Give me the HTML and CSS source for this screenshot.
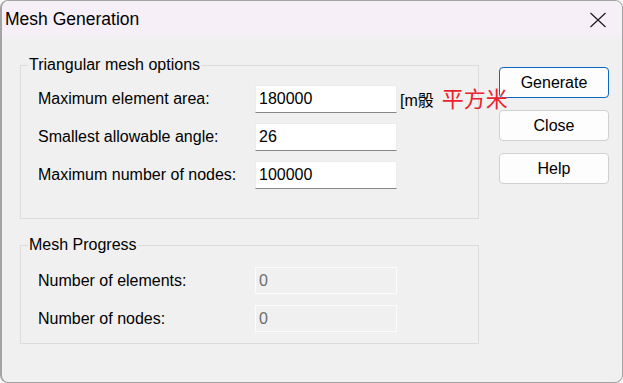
FILE: index.html
```html
<!DOCTYPE html>
<html lang="en">
<head>
    <meta charset="UTF-8">
    <meta name="viewport" content="width=device-width, initial-scale=1.0">
    <title>Mesh Generation</title>
    <link rel="stylesheet" href="styles.css">
</head>
<body>
    <div class="window">
        <div class="titlebar">
            <span class="title">Mesh Generation</span>
            <button class="close-x" aria-label="Close">
                <svg width="18" height="16" viewBox="0 0 18 16">
                    <path d="M1.5 1 L16.5 15 M16.5 1 L1.5 15" stroke="#1b1b1b" stroke-width="1.2" fill="none"/>
                </svg>
            </button>
        </div>
        <div class="content">
            <div class="groups">
                <fieldset class="group options">
                    <legend>Triangular mesh options</legend>
                    <div class="form-row">
                        <label for="area">Maximum element area:</label>
                        <input type="text" id="area" value="180000">
                        <span class="unit">[m骰</span>
                        <span class="unit-cn">平方米</span>
                    </div>
                    <div class="form-row">
                        <label for="angle">Smallest allowable angle:</label>
                        <input type="text" id="angle" value="26">
                    </div>
                    <div class="form-row">
                        <label for="nodes">Maximum number of nodes:</label>
                        <input type="text" id="nodes" value="100000">
                    </div>
                </fieldset>
                <fieldset class="group progress">
                    <legend>Mesh Progress</legend>
                    <div class="form-row">
                        <label for="elements-out">Number of elements:</label>
                        <input type="text" id="elements-out" value="0" disabled>
                    </div>
                    <div class="form-row">
                        <label for="nodes-out">Number of nodes:</label>
                        <input type="text" id="nodes-out" value="0" disabled>
                    </div>
                </fieldset>
            </div>
            <div class="actions">
                <button class="btn primary">Generate</button>
                <button class="btn">Close</button>
                <button class="btn">Help</button>
            </div>
        </div>
    </div>
</body>
</html>
```

FILE: styles.css
```css
body {
    margin: 0;
    background-color: #f7f7f7;
    font-family: "Liberation Sans", Arial, "Noto Sans CJK SC", sans-serif;
    font-size: 16px;
    color: #000;
}
.window {
    box-sizing: border-box;
    width: 623px;
    height: 383px;
    border: 1px solid #a3a3a3;
    border-left-width: 2px;
    border-radius: 8px;
    background: #f0f0f0;
    overflow: hidden;
}
.titlebar {
    height: 35px;
    display: flex;
    align-items: center;
    justify-content: space-between;
    background: #f6eff7;
    padding-left: 3px;
}
.title {
    font-size: 17.5px;
    padding-top: 2px;
}
.close-x {
    width: 46px;
    height: 35px;
    border: none;
    background: none;
    display: flex;
    align-items: center;
    justify-content: center;
    padding: 2px 0 0 3px;
    margin-right: 3px;
}
.content {
    display: flex;
    gap: 20px;
    padding: 0 14px 0 18px;
}
.groups {
    display: flex;
    flex-direction: column;
    width: 459px;
    flex-shrink: 0;
}
.group {
    margin: 20px 0 0;
    padding: 11px 0 29px 17px;
    border: 1px solid #dcdcdc;
    display: flex;
    flex-direction: column;
    gap: 10px;
    min-width: 0;
}
.group legend {
    margin-left: -10px;
    padding: 0 1px;
    line-height: 18px;
}
.group.progress {
    margin-top: 17px;
    padding: 13px 0 11px 17px;
    gap: 11px;
}
.form-row {
    display: flex;
    align-items: center;
    white-space: nowrap;
}
.form-row label {
    width: 217px;
    flex-shrink: 0;
}
.form-row input {
    box-sizing: border-box;
    flex-shrink: 0;
    width: 142px;
    height: 28px;
    padding: 0 3px;
    border: 1px solid #ececec;
    border-bottom: 1px solid #868686;
    background: #fff;
    font-family: inherit;
    font-size: 16px;
    color: #000;
    outline: none;
}
.form-row input:disabled {
    height: 27px;
    border: 1px solid #fbfbfb;
    background: #f0f0f0;
    color: #6d6d6d;
}
.unit {
    margin-left: 3px;
    flex-shrink: 0;
    font-family: "Liberation Sans", "Noto Sans CJK TC", sans-serif;
}
.unit-cn {
    margin-left: 8px;
    margin-top: -5px;
    flex-shrink: 0;
    font-size: 22px;
    color: #e8232c;
    font-family: "Noto Sans CJK SC", sans-serif;
    position: relative;
}
.actions {
    display: flex;
    flex-direction: column;
    gap: 12px;
    padding-top: 31px;
}
.btn {
    width: 110px;
    height: 31px;
    border: 1px solid #d0d0d0;
    border-radius: 4px;
    background: #fdfdfd;
    font-family: inherit;
    font-size: 16px;
    color: #000;
}
.btn.primary {
    border-color: #0b67c2;
}
```
